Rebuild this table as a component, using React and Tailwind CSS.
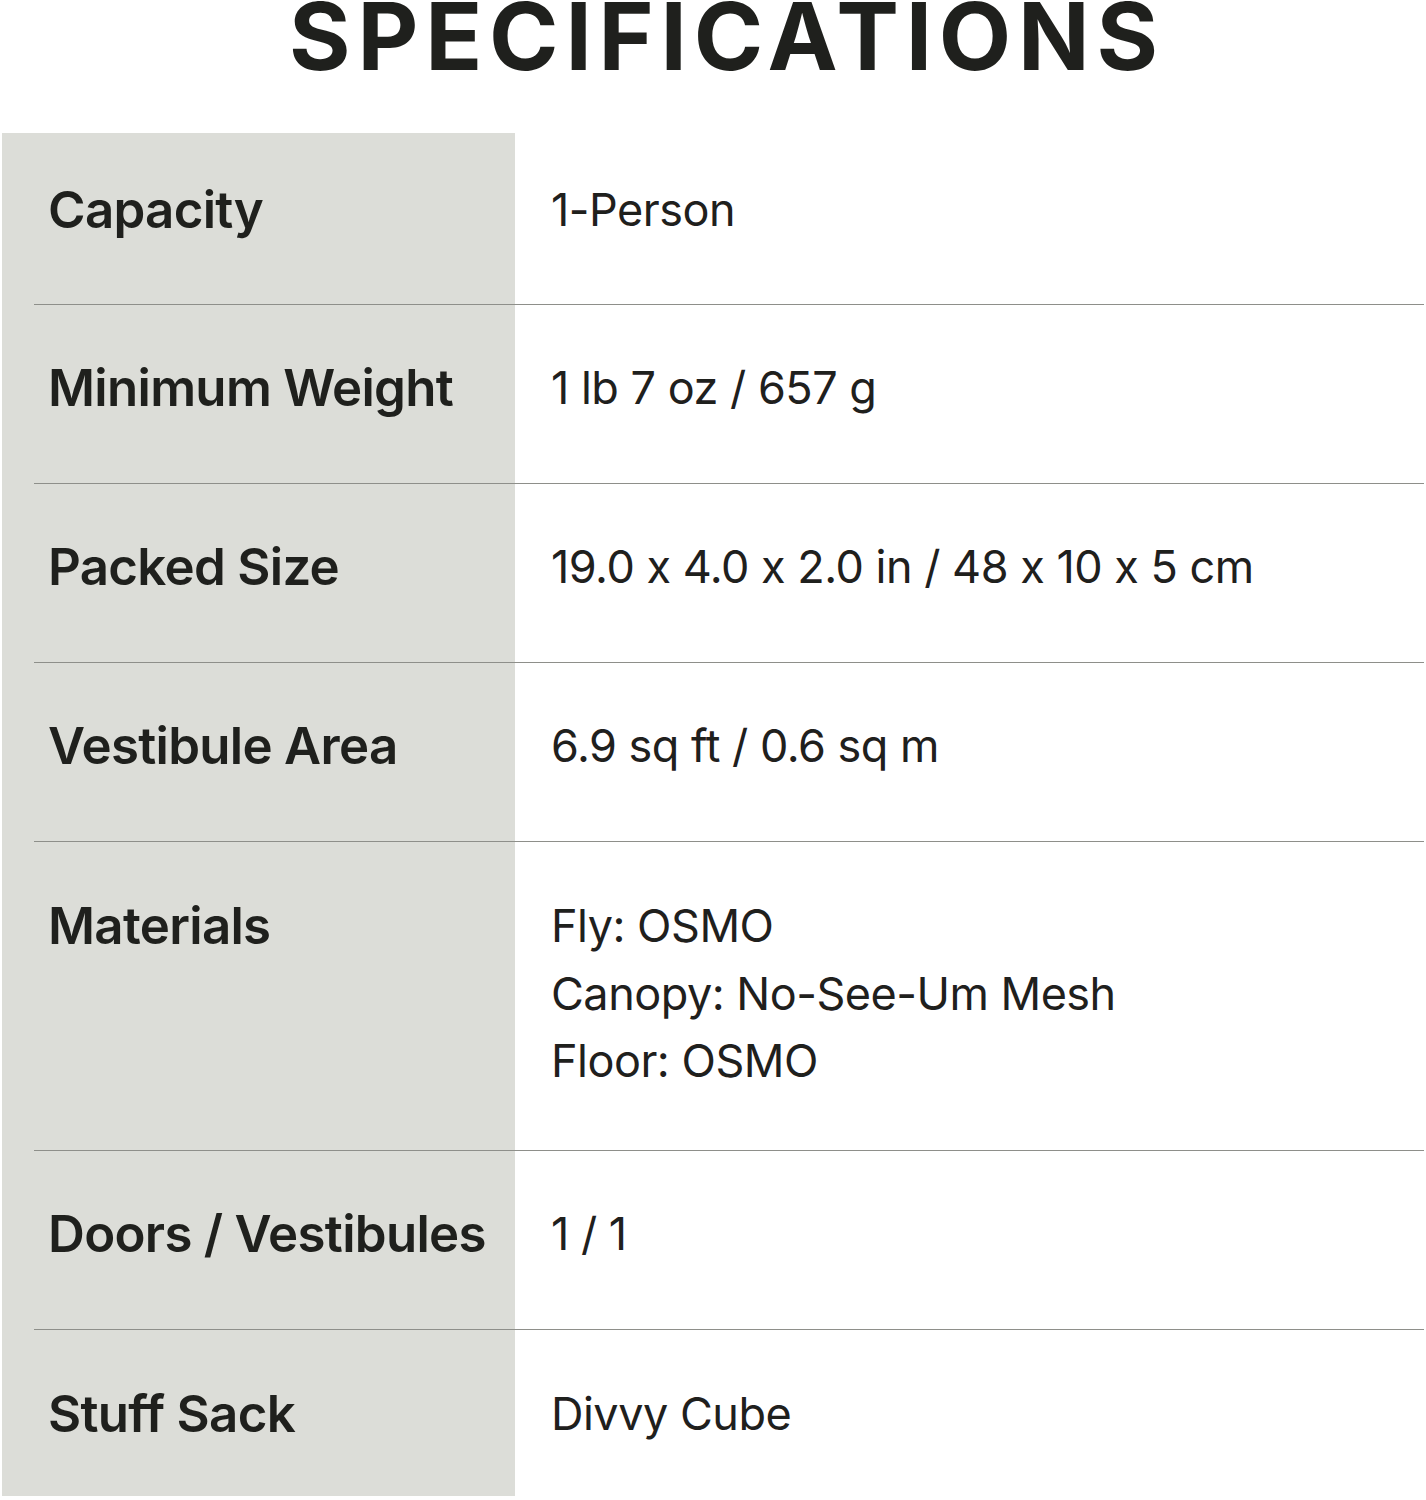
import React from "react";

const rows = [
  { label: "Capacity", values: ["1-Person"], pt: "pt-[43px]", pb: "pb-[60px]" },
  { label: "Minimum Weight", values: ["1 lb 7 oz / 657 g"], pt: "pt-[49px]", pb: "pb-[61px]" },
  { label: "Packed Size", values: ["19.0 x 4.0 x 2.0 in / 48 x 10 x 5 cm"], pt: "pt-[49px]", pb: "pb-[61px]" },
  { label: "Vestibule Area", values: ["6.9 sq ft / 0.6 sq m"], pt: "pt-[49px]", pb: "pb-[61px]" },
  {
    label: "Materials",
    values: ["Fly: OSMO", "Canopy: No-See-Um Mesh", "Floor: OSMO"],
    pt: "pt-[50px]",
    pb: "pb-[55px]",
  },
  { label: "Doors / Vestibules", values: ["1 / 1"], pt: "pt-[49px]", pb: "pb-[61px]" },
  { label: "Stuff Sack", values: ["Divvy Cube"], pt: "pt-[50px]", pb: "pb-[48px]" },
];

function Separator() {
  return (
    <div className="flex h-px">
      <div className="w-[32px] bg-[#dcddd8]" />
      <div className="flex-1 bg-[#8e8f8a]" />
    </div>
  );
}

export default function App() {
  return (
    <div
      className="w-[1426px] h-[1500px] bg-white text-[#1f201d] overflow-hidden"
      style={{ fontFamily: "Inter, 'Liberation Sans', sans-serif" }}
    >
      <h1 className="pl-[28px] text-center text-[94px] leading-[72px] font-bold tracking-[6.8px]">
        SPECIFICATIONS
      </h1>
      <div className="mt-[61px] ml-[2px] w-[1422px]">
        {rows.map((r, i) => (
          <React.Fragment key={r.label}>
            {i > 0 && <Separator />}
            <div className="flex">
              <div className={`w-[513px] shrink-0 bg-[#dcddd8] pl-[46px] ${r.pt} ${r.pb}`}>
                <div className="text-[51px] leading-[68px] font-semibold tracking-[-0.7px]">
                  {r.label}
                </div>
              </div>
              <div className={`flex-1 pl-[36px] ${r.pt} ${r.pb}`}>
                {r.values.map((v) => (
                  <div key={v} className="text-[45px] leading-[67.5px] font-normal tracking-[-0.5px]">
                    {v}
                  </div>
                ))}
              </div>
            </div>
          </React.Fragment>
        ))}
      </div>
    </div>
  );
}
